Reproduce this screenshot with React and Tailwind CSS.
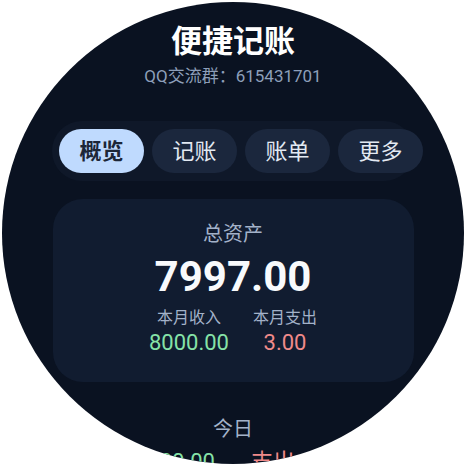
import { useState } from 'react';

const tabs = ['概览', '记账', '账单', '更多'];

export default function App() {
  const [active, setActive] = useState(0);

  return (
    <div
      className="w-[466px] h-[466px] bg-white p-[2px]"
      style={{ fontFamily: 'Roboto, "Noto Sans CJK SC", sans-serif' }}
    >
      <div className="w-full h-full rounded-full bg-[#0a1221] overflow-hidden flex flex-col items-center">
        {/* header */}
        <h1 className="mt-[22px] text-[31px] leading-[36px] font-bold text-white">便捷记账</h1>
        <p className="mt-[5px] text-[17px] leading-[22px] text-[#8d9fb9]">QQ交流群：615431701</p>

        {/* tabs, the row is wider than its box and spills out on the right */}
        <div className="mt-[34px] w-[362px] shrink-0 rounded-full bg-[#0f1829] py-2 pl-[7px]">
          <div className="flex gap-2 w-max">
            {tabs.map((t, i) => (
              <button
                key={t}
                onClick={() => setActive(i)}
                className={
                  i === active
                    ? 'w-[85px] h-[44px] rounded-full bg-[#bfdafe] text-[#1c2638] text-[22px] font-bold'
                    : 'w-[85px] h-[44px] rounded-full bg-[#1b273d] text-[#e3e9f2] text-[22px]'
                }
              >
                {t}
              </button>
            ))}
          </div>
        </div>

        {/* summary card */}
        <div className="mt-[18px] w-[361px] h-[183px] shrink-0 rounded-[30px] bg-[#111c30] flex flex-col items-center pt-[21px]">
          <p className="text-[20px] leading-[28px] text-[#a3b2c9]">总资产</p>
          <p className="mt-[5px] text-[42px] leading-[48px] font-bold text-[#f8fafc]">7997.00</p>
          <div className="mt-[6px] flex gap-6">
            <div className="flex flex-col items-center">
              <span className="text-[16px] leading-[22px] text-[#a3b2c9]">本月收入</span>
              <span className="text-[22px] leading-[28px] text-[#86e3a8]">8000.00</span>
            </div>
            <div className="flex flex-col items-center">
              <span className="text-[16px] leading-[22px] text-[#a3b2c9]">本月支出</span>
              <span className="text-[22px] leading-[28px] text-[#f08a8a]">3.00</span>
            </div>
          </div>
        </div>

        {/* today */}
        <p className="mt-[33px] text-[20px] leading-[28px] text-[#a3b2c9]">今日</p>
        <div className="mt-[5px] w-full flex text-[22px] leading-[28px]">
          <span className="flex-1 text-right pr-[1px] text-[#86e3a8]">8000.00</span>
          <span className="flex-1 text-left pl-[35px] text-[#f08a8a]">支出 3.00</span>
        </div>
      </div>
    </div>
  );
}
